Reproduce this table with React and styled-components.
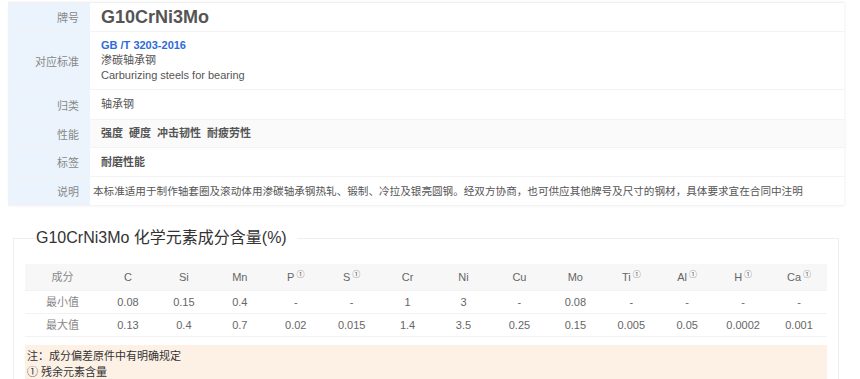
import React from 'react';
import styled, { createGlobalStyle } from 'styled-components';

const GlobalStyle = createGlobalStyle`
  body {
    margin: 0;
    background: #fff;
    font-family: "Liberation Sans", Arial, "Noto Sans CJK SC", sans-serif;
    color: #555;
  }
`;

const Page = styled.div`
  padding: 2px 16px 0 8px;
`;

const InfoTable = styled.div`
  display: grid;
  grid-template-columns: 82px 1fr;
  border-top: 1px solid #f0f0f0;
  box-shadow: 1px 0 3px rgba(0, 0, 0, 0.06);
`;

const Label = styled.div`
  background: #ebf4fc;
  color: #888;
  font-size: 11px;
  padding-right: 11px;
  display: flex;
  align-items: center;
  justify-content: flex-end;
  height: ${(p) => p.$h || 28}px;
  border-bottom: 1px solid #f3f3f3;
`;

const Value = styled.div`
  display: flex;
  flex-direction: column;
  justify-content: center;
  padding-left: ${(p) => (p.$tight ? 3 : 11)}px;
  font-size: ${(p) => (p.$tight ? 10.6 : 11)}px;
  color: #555;
  background: ${(p) => (p.$gray ? '#fafafa' : '#fff')};
  border-bottom: 1px solid #f3f3f3;
  line-height: 15px;
  white-space: nowrap;
`;

const Grade = styled.span`
  font-size: 18px;
  font-weight: bold;
  color: #555;
`;

const StdLink = styled.span`
  color: #2f6bd8;
  font-weight: bold;
`;

const Tags = styled.div`
  display: flex;
  gap: 6px;
  font-weight: bold;
  color: #555;
  font-size: 11px;
`;

const Fieldset = styled.fieldset`
  margin: 22px 5px 0 5px;
  border: 1px solid #eeeeee;
  border-bottom: none;
  padding: 16px 11px 0 11px;
`;

const Legend = styled.legend`
  margin-left: 11px;
  padding: 0 10px 0 0;
  font-size: 16px;
  color: #333;
  line-height: 20px;
`;

const ChemTable = styled.div`
  display: grid;
  grid-template-columns: 75px repeat(13, 1fr);
`;

const Cell = styled.div`
  text-align: center;
  font-size: 11px;
  color: ${(p) => (p.$label ? '#888' : '#666')};
  background: ${(p) => (p.$head ? '#f7f7f7' : '#fff')};
  height: ${(p) => (p.$head ? 26 : 22)}px;
  line-height: ${(p) => (p.$head ? 26 : 22)}px;
  border-bottom: 1px solid #f2f2f2;
  white-space: nowrap;
`;

const Sup = styled.sup`
  font-size: 8px;
  margin-left: 2px;
  vertical-align: 4px;
  line-height: 0;
`;

const Note = styled.div`
  margin-top: 8px;
  background: #fdf1e6;
  padding: 3px 2px 6px;
  font-size: 11px;
  color: #333;
  line-height: 16px;
`;

const elements = ['C', 'Si', 'Mn', 'P', 'S', 'Cr', 'Ni', 'Cu', 'Mo', 'Ti', 'Al', 'H', 'Ca'];
const residual = ['P', 'S', 'Ti', 'Al', 'H', 'Ca'];
const minRow = ['0.08', '0.15', '0.4', '-', '-', '1', '3', '-', '0.08', '-', '-', '-', '-'];
const maxRow = ['0.13', '0.4', '0.7', '0.02', '0.015', '1.4', '3.5', '0.25', '0.15', '0.005', '0.05', '0.0002', '0.001'];

const App = () => {
  return (
    <Page>
      <GlobalStyle />
      <InfoTable>
        <Label $h={28}>牌号</Label>
        <Value>
          <Grade>G10CrNi3Mo</Grade>
        </Value>

        <Label $h={57}>对应标准</Label>
        <Value>
          <StdLink>GB /T 3203-2016</StdLink>
          <span>渗碳轴承钢</span>
          <span>Carburizing steels for bearing</span>
        </Value>

        <Label $h={29}>归类</Label>
        <Value>轴承钢</Value>

        <Label $h={27}>性能</Label>
        <Value $gray>
          <Tags>
            <span>强度</span>
            <span>硬度</span>
            <span>冲击韧性</span>
            <span>耐疲劳性</span>
          </Tags>
        </Value>

        <Label $h={28}>标签</Label>
        <Value>
          <Tags>
            <span>耐磨性能</span>
          </Tags>
        </Value>

        <Label $h={28}>说明</Label>
        <Value $tight>
          本标准适用于制作轴套圈及滚动体用渗碳轴承钢热轧、锻制、冷拉及银亮圆钢。经双方协商，也可供应其他牌号及尺寸的钢材，具体要求宜在合同中注明
        </Value>
      </InfoTable>

      <Fieldset>
        <Legend>G10CrNi3Mo 化学元素成分含量(%)</Legend>
        <ChemTable>
          <Cell $head $label>成分</Cell>
          {elements.map((el) => (
            <Cell $head key={el}>
              {el}
              {residual.includes(el) && <Sup>①</Sup>}
            </Cell>
          ))}
          <Cell $label>最小值</Cell>
          {minRow.map((v, i) => (
            <Cell key={'min' + i}>{v}</Cell>
          ))}
          <Cell $label>最大值</Cell>
          {maxRow.map((v, i) => (
            <Cell key={'max' + i}>{v}</Cell>
          ))}
        </ChemTable>
        <Note>
          <div>注：成分偏差原件中有明确规定</div>
          <div>① 残余元素含量</div>
        </Note>
      </Fieldset>
    </Page>
  );
};

export default App;
